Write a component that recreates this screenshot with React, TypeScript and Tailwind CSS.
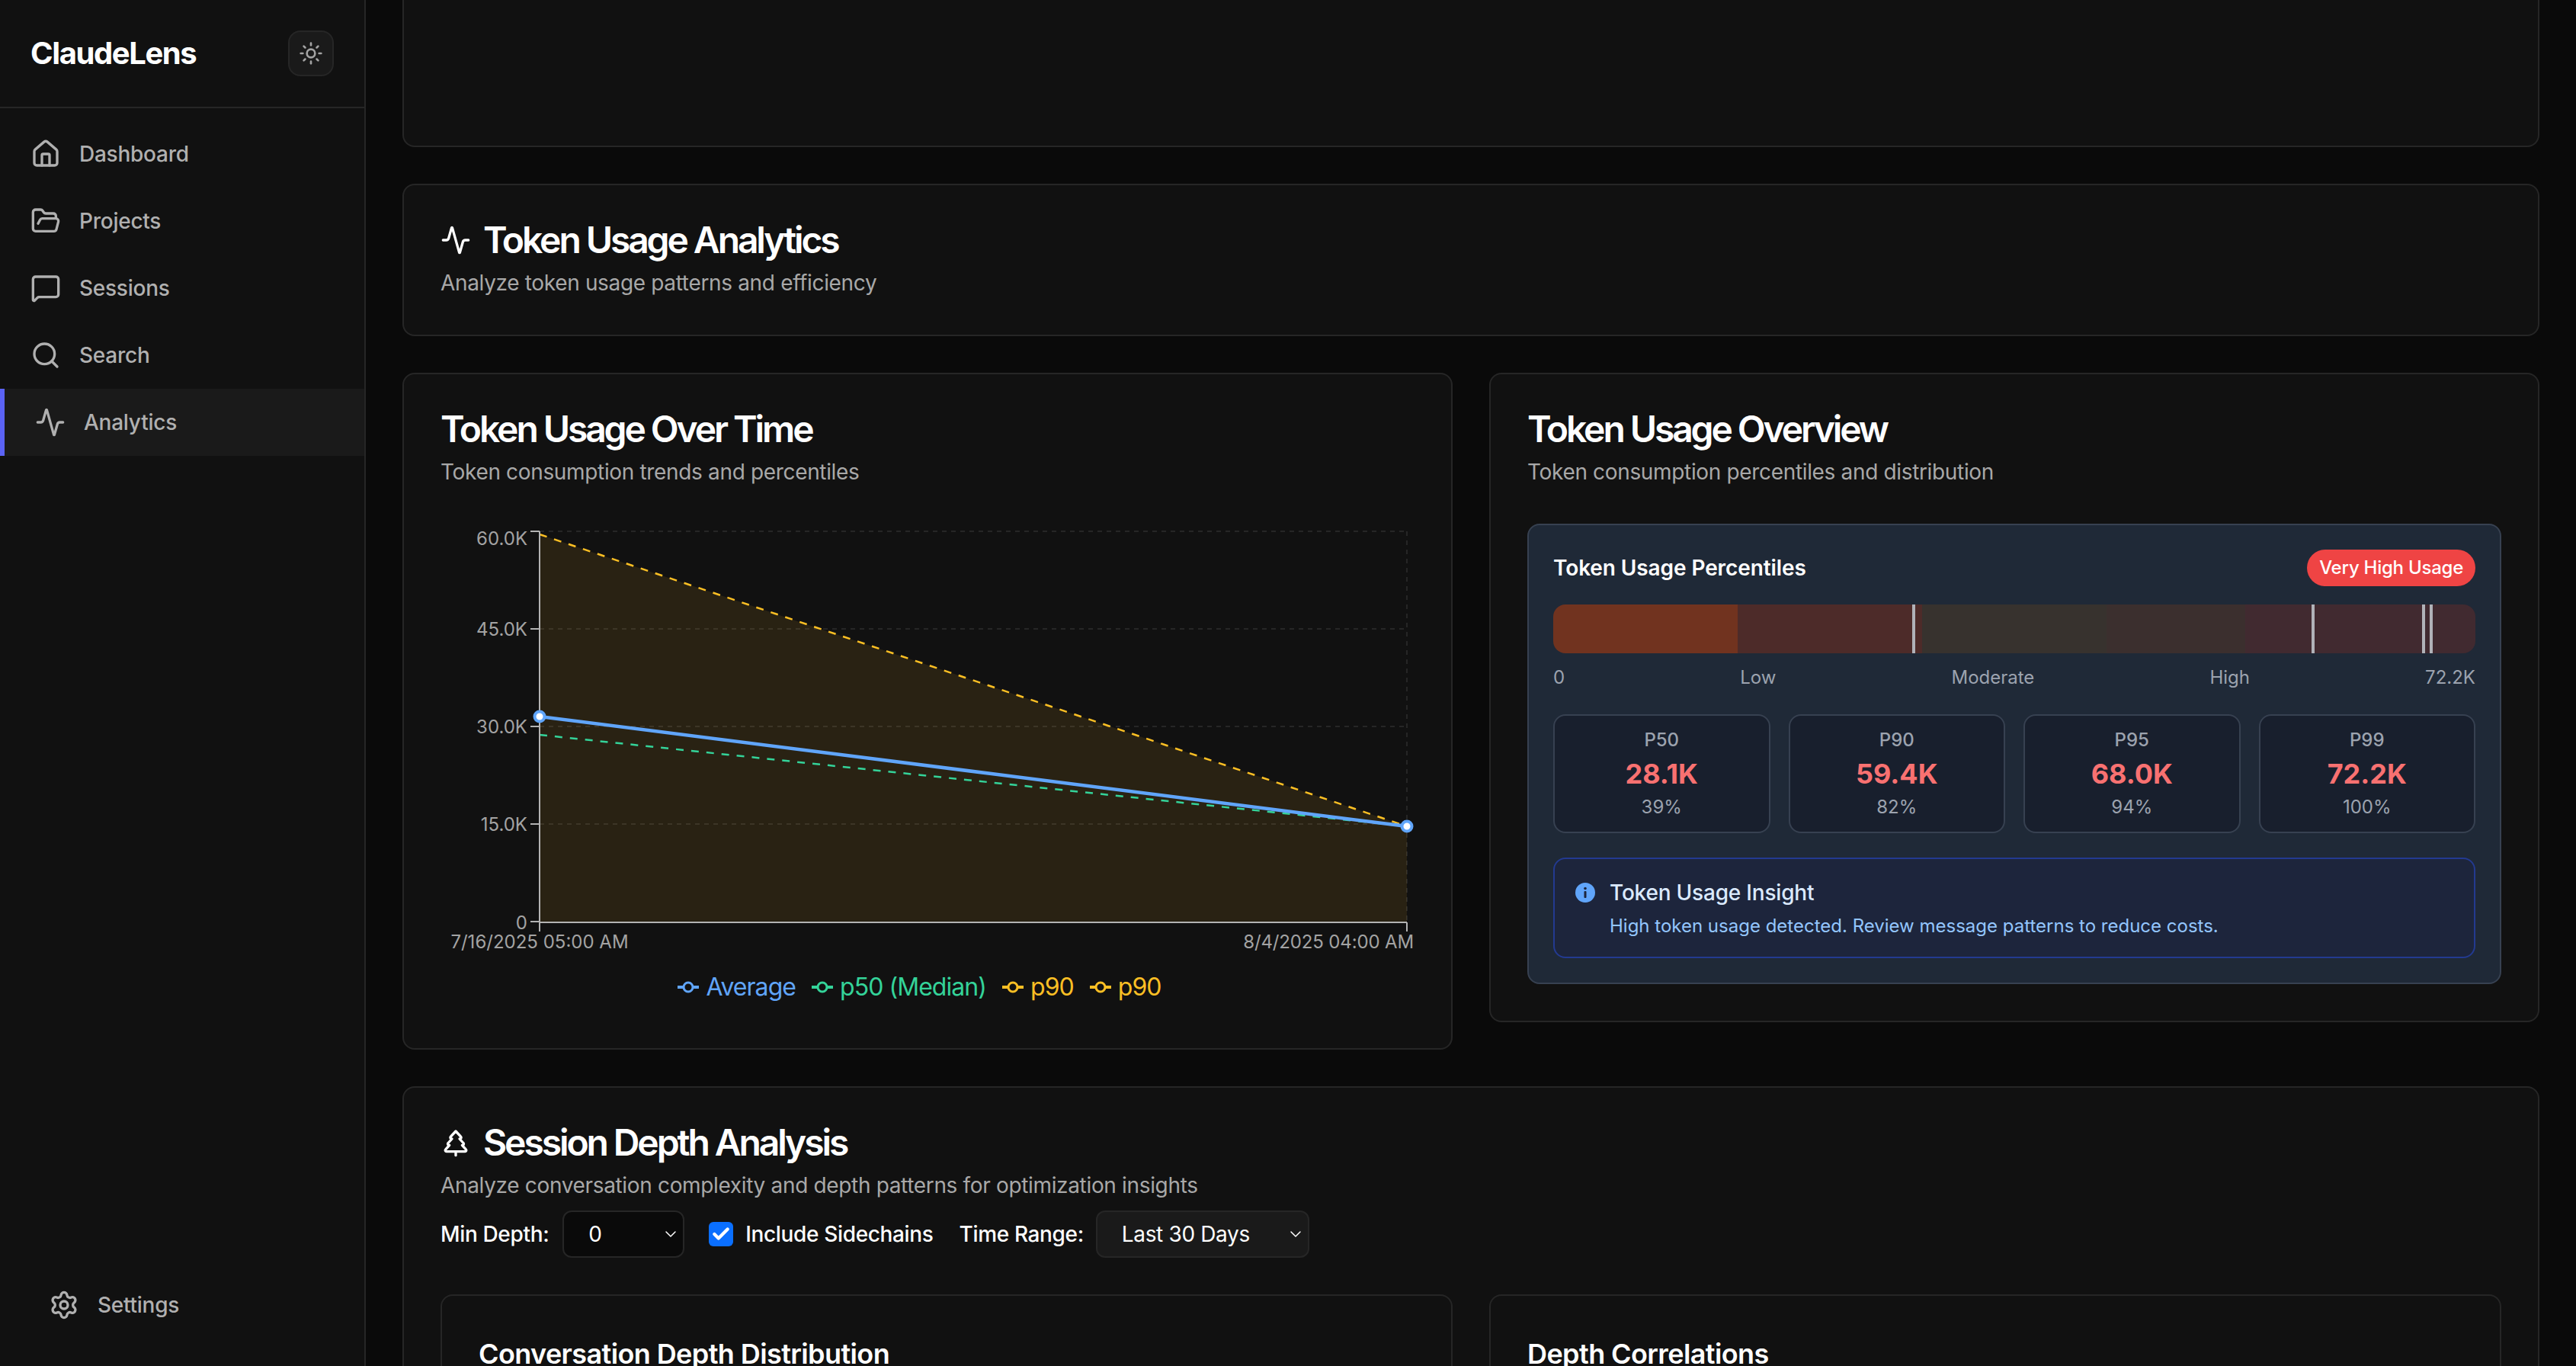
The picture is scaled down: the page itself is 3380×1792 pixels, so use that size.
import { Activity, Check, ChevronDown, FolderOpen, House, MessageSquare, Search, Settings, Sun, TreePine } from "lucide-react";
import type { ReactNode } from "react";

const navItems = [
  { label: "Dashboard", icon: House },
  { label: "Projects", icon: FolderOpen },
  { label: "Sessions", icon: MessageSquare },
  { label: "Search", icon: Search },
  { label: "Analytics", icon: Activity, active: true },
];

const stats = [
  { label: "P50", value: "28.1K", pct: "39%" },
  { label: "P90", value: "59.4K", pct: "82%" },
  { label: "P95", value: "68.0K", pct: "94%" },
  { label: "P99", value: "72.2K", pct: "100%" },
];

const legend = [
  { label: "Average", text: "text-[#60a5fa]" },
  { label: "p50 (Median)", text: "text-[#34d399]" },
  { label: "p90", text: "text-[#fbbf24]" },
  { label: "p90", text: "text-[#fbbf24]" },
];

const yTicks = [
  { label: "60.0K", y: 10, textY: 28 },
  { label: "45.0K", y: 138, textY: 147 },
  { label: "30.0K", y: 266, textY: 275 },
  { label: "15.0K", y: 394, textY: 403 },
  { label: "0", y: 522, textY: 532 },
];

function Sidebar() {
  return (
    <aside className="flex h-screen w-[480px] shrink-0 flex-col border-r-2 border-[#262626] bg-[#111111]">
      <div className="flex h-[142px] items-center justify-between border-b-2 border-[#262626] pl-10 pr-10">
        <span className="text-[40px] font-bold tracking-[-1.4px] text-white">ClaudeLens</span>
        <button className="flex h-[60px] w-[60px] items-center justify-center rounded-2xl border-2 border-[#262626] bg-[#1a1a1a] text-[#a3a3a3]">
          <Sun size={32} />
        </button>
      </div>

      <nav className="flex flex-col pt-4">
        {navItems.map((item) => (
          <div
            key={item.label}
            className={`flex h-[88px] items-center gap-6 px-10 text-[28px] font-medium tracking-[-0.25px] text-[#b0b0b0] ${
              item.active ? "border-l-[6px] border-[#5b63f5] bg-[#1a1a1a]" : ""
            }`}
          >
            <item.icon size={40} />
            {item.label}
          </div>
        ))}
      </nav>

      {/* Settings stays at the bottom */}
      <div className="mt-auto mb-9 flex h-[88px] items-center gap-6 pl-16 text-[28px] font-medium tracking-[-0.25px] text-[#b0b0b0]">
        <Settings size={40} />
        Settings
      </div>
    </aside>
  );
}

function Card({ className = "", children }: { className?: string; children: ReactNode }) {
  return <div className={`rounded-2xl border-2 border-[#262626] bg-[#111111] ${className}`}>{children}</div>;
}

function CardHeader({ title, description, icon }: { title: string; description: string; icon?: ReactNode }) {
  return (
    <div>
      <h2 className="flex items-center gap-4 text-5xl leading-[48px] font-semibold tracking-[-3.1px] text-white">
        {icon}
        {title}
      </h2>
      <p className="mt-3 text-[28px] leading-10 tracking-[-0.34px] text-[#a8a8a8]">{description}</p>
    </div>
  );
}

function TokenChart() {
  return (
    <svg className="h-[570px] w-full" fontSize="24" fill="#a3a3a3">
      {/* grid */}
      <g stroke="#262626" strokeWidth="2" strokeDasharray="6 6">
        {yTicks.slice(0, 4).map((t) => (
          <line key={t.y} x1="130" x2="1268" y1={t.y} y2={t.y} />
        ))}
        <line x1="1268" x2="1268" y1="10" y2="522" />
      </g>

      {/* p90 area */}
      <polygon points="130,14 1268,397 1268,522 130,522" fill="#fbbf24" fillOpacity="0.1" />
      <line x1="130" y1="14" x2="1268" y2="397" stroke="#fbbf24" strokeWidth="2.5" strokeDasharray="10 10" />
      <line x1="130" y1="277" x2="1268" y2="397" stroke="#34d399" strokeWidth="2.5" strokeDasharray="10 10" />
      <line x1="130" y1="253" x2="1268" y2="397" stroke="#60a5fa" strokeWidth="4.5" />

      {/* axes */}
      <g stroke="#b3b3b3" strokeWidth="2">
        <line x1="130" x2="130" y1="10" y2="535" />
        <line x1="130" x2="1268" y1="523" y2="523" />
        <line x1="1268" x2="1268" y1="523" y2="535" />
        {yTicks.map((t) => (
          <line key={t.y} x1="118" x2="130" y1={t.y} y2={t.y} />
        ))}
      </g>

      {yTicks.map((t) => (
        <text key={t.label} x="114" y={t.textY} textAnchor="end">
          {t.label}
        </text>
      ))}
      <text x="130" y="557" textAnchor="middle">
        7/16/2025 05:00 AM
      </text>
      <text x="1277" y="557" textAnchor="end" letterSpacing="-0.15">
        8/4/2025 04:00 AM
      </text>

      <circle cx="130" cy="253" r="6.5" fill="#ffffff" stroke="#60a5fa" strokeWidth="4" />
      <circle cx="1268" cy="397" r="6.5" fill="#ffffff" stroke="#60a5fa" strokeWidth="4" />
    </svg>
  );
}

function Legend() {
  return (
    <div className="mt-[14px] flex h-12 items-center justify-center gap-[21px] pr-[21px] text-[32px] leading-[48px] tracking-[-0.95px]">
      {legend.map((item, i) => (
        <div key={i} className={`flex items-center gap-[9px] ${item.text}`}>
          <svg width="28" height="28" viewBox="0 0 28 28" fill="none" stroke="currentColor">
            <line x1="0" x2="28" y1="14" y2="14" strokeWidth="4" />
            <circle cx="14" cy="14" r="6" fill="#111111" strokeWidth="3" />
          </svg>
          {item.label}
        </div>
      ))}
    </div>
  );
}

function PercentileBar() {
  return (
    <div className="relative flex h-16 overflow-hidden rounded-2xl">
      <div className="w-[20%] bg-[#71331f]" />
      <div className="w-[20%] bg-[#4d2b29]" />
      <div className="w-[20%] bg-[#37322e]" />
      <div className="w-[15%] bg-[#3b2f2e]" />
      <div className="w-[25%] bg-[#412a30]" />
      <span className="absolute inset-y-0 left-[38.9%] w-1 bg-[#b0b2b8]" />
      <span className="absolute inset-y-0 left-[82.2%] w-1 bg-[#b0b2b8]" />
      <span className="absolute inset-y-0 left-[94.2%] w-1 bg-[#b0b2b8]" />
      <span className="absolute inset-y-0 left-[95%] w-1 bg-[#b0b2b8]" />
    </div>
  );
}

function TokenOverview() {
  return (
    <div className="rounded-2xl border-2 border-[#374151] bg-[#1f2937] p-8">
      <div className="flex items-center justify-between">
        <h3 className="text-[28px] leading-10 font-semibold tracking-[-0.1px] text-white">Token Usage Percentiles</h3>
        <span className="flex h-12 items-center rounded-full bg-[#ef4444] px-4 text-2xl font-medium tracking-[-0.25px] text-white">Very High Usage</span>
      </div>

      <div className="mt-6">
        <PercentileBar />
      </div>
      <div className="mt-4 flex justify-between text-2xl leading-8 text-[#9ca3af]">
        <span>0</span>
        <span>Low</span>
        <span>Moderate</span>
        <span>High</span>
        <span>72.2K</span>
      </div>

      <div className="mt-8 grid grid-cols-4 gap-6">
        {stats.map((s) => (
          <div key={s.label} className="flex h-[156px] flex-col items-center justify-center rounded-2xl border-2 border-[#374151] bg-[#181f2d]">
            <span className="text-2xl leading-8 font-medium text-[#9ca3af]">{s.label}</span>
            <span className="text-[36px] leading-14 font-bold text-[#f87171]">{s.value}</span>
            <span className="text-2xl leading-8 text-[#9ca3af]">{s.pct}</span>
          </div>
        ))}
      </div>

      <div className="mt-8 flex gap-[18px] rounded-2xl border-2 border-[#233a90] bg-[#1d253c] px-6 py-6">
        <svg width="28" height="28" viewBox="0 0 28 28" className="mt-[6px] ml-[2px] shrink-0">
          <circle cx="14" cy="14" r="13" fill="#60a5fa" />
          <rect x="12.5" y="12" width="3" height="9" rx="1" fill="#1d253c" />
          <circle cx="14" cy="8.5" r="1.8" fill="#1d253c" />
        </svg>
        <div>
          <div className="text-[28px] leading-10 font-medium tracking-[-0.2px] text-[#dbeafe]">Token Usage Insight</div>
          <div className="mt-2 text-2xl leading-8 text-[#93c5fd]">High token usage detected. Review message patterns to reduce costs.</div>
        </div>
      </div>
    </div>
  );
}

function SelectBox({ value, className }: { value: string; className: string }) {
  return (
    <div className={`flex h-[62px] items-center justify-between rounded-xl border-2 border-[#262626] pl-8 pr-[4px] text-[28px] text-white ${className}`}>
      {value}
      <ChevronDown size={24} strokeWidth={1.5} />
    </div>
  );
}

function DepthControls() {
  return (
    <div className="mt-[13px] flex items-center text-[28px] font-medium tracking-[-0.35px] text-white">
      <div className="flex items-center gap-[18px]">
        <span>Min Depth:</span>
        <SelectBox value="0" className="w-[160px] bg-[#0a0a0a] font-normal" />
      </div>
      <div className="ml-8 flex items-center gap-4">
        <span className="flex h-8 w-8 items-center justify-center rounded-md bg-[#0a6fff]">
          <Check size={26} strokeWidth={4} color="white" />
        </span>
        <span>Include Sidechains</span>
      </div>
      <div className="ml-[34px] flex items-center gap-4">
        <span>Time Range:</span>
        <SelectBox value="Last 30 Days" className="w-[280px] bg-[#1a1a1a] font-normal" />
      </div>
    </div>
  );
}

export default function App() {
  return (
    <div className="flex h-screen overflow-hidden bg-[#0a0a0a] font-['Inter',sans-serif] antialiased">
      <Sidebar />
      <main className="flex h-screen flex-1 flex-col gap-12 overflow-hidden px-12">
        <Card className="h-[193px] shrink-0 rounded-t-none border-t-0">
          <div />
        </Card>

        <Card className="shrink-0 p-12">
          <CardHeader title="Token Usage Analytics" description="Analyze token usage patterns and efficiency" icon={<Activity size={40} />} />
        </Card>

        <div className="grid shrink-0 grid-cols-2 items-start gap-12">
          <Card className="p-12">
            <CardHeader title="Token Usage Over Time" description="Token consumption trends and percentiles" />
            <div className="mt-12 h-[640px]">
              <TokenChart />
              <Legend />
            </div>
          </Card>
          <Card className="p-12">
            <CardHeader title="Token Usage Overview" description="Token consumption percentiles and distribution" />
            <div className="mt-12">
              <TokenOverview />
            </div>
          </Card>
        </div>

        <Card className="shrink-0 p-12">
          <CardHeader
            title="Session Depth Analysis"
            description="Analyze conversation complexity and depth patterns for optimization insights"
            icon={<TreePine size={40} />}
          />
          <DepthControls />
          <div className="mt-12 grid grid-cols-2 gap-12">
            <Card className="h-[400px] p-12">
              <h3 className="text-[36px] leading-14 font-semibold tracking-[-0.6px] text-white">Conversation Depth Distribution</h3>
            </Card>
            <Card className="h-[400px] p-12">
              <h3 className="text-[36px] leading-14 font-semibold tracking-[-0.6px] text-white">Depth Correlations</h3>
            </Card>
          </div>
        </Card>
      </main>
    </div>
  );
}
